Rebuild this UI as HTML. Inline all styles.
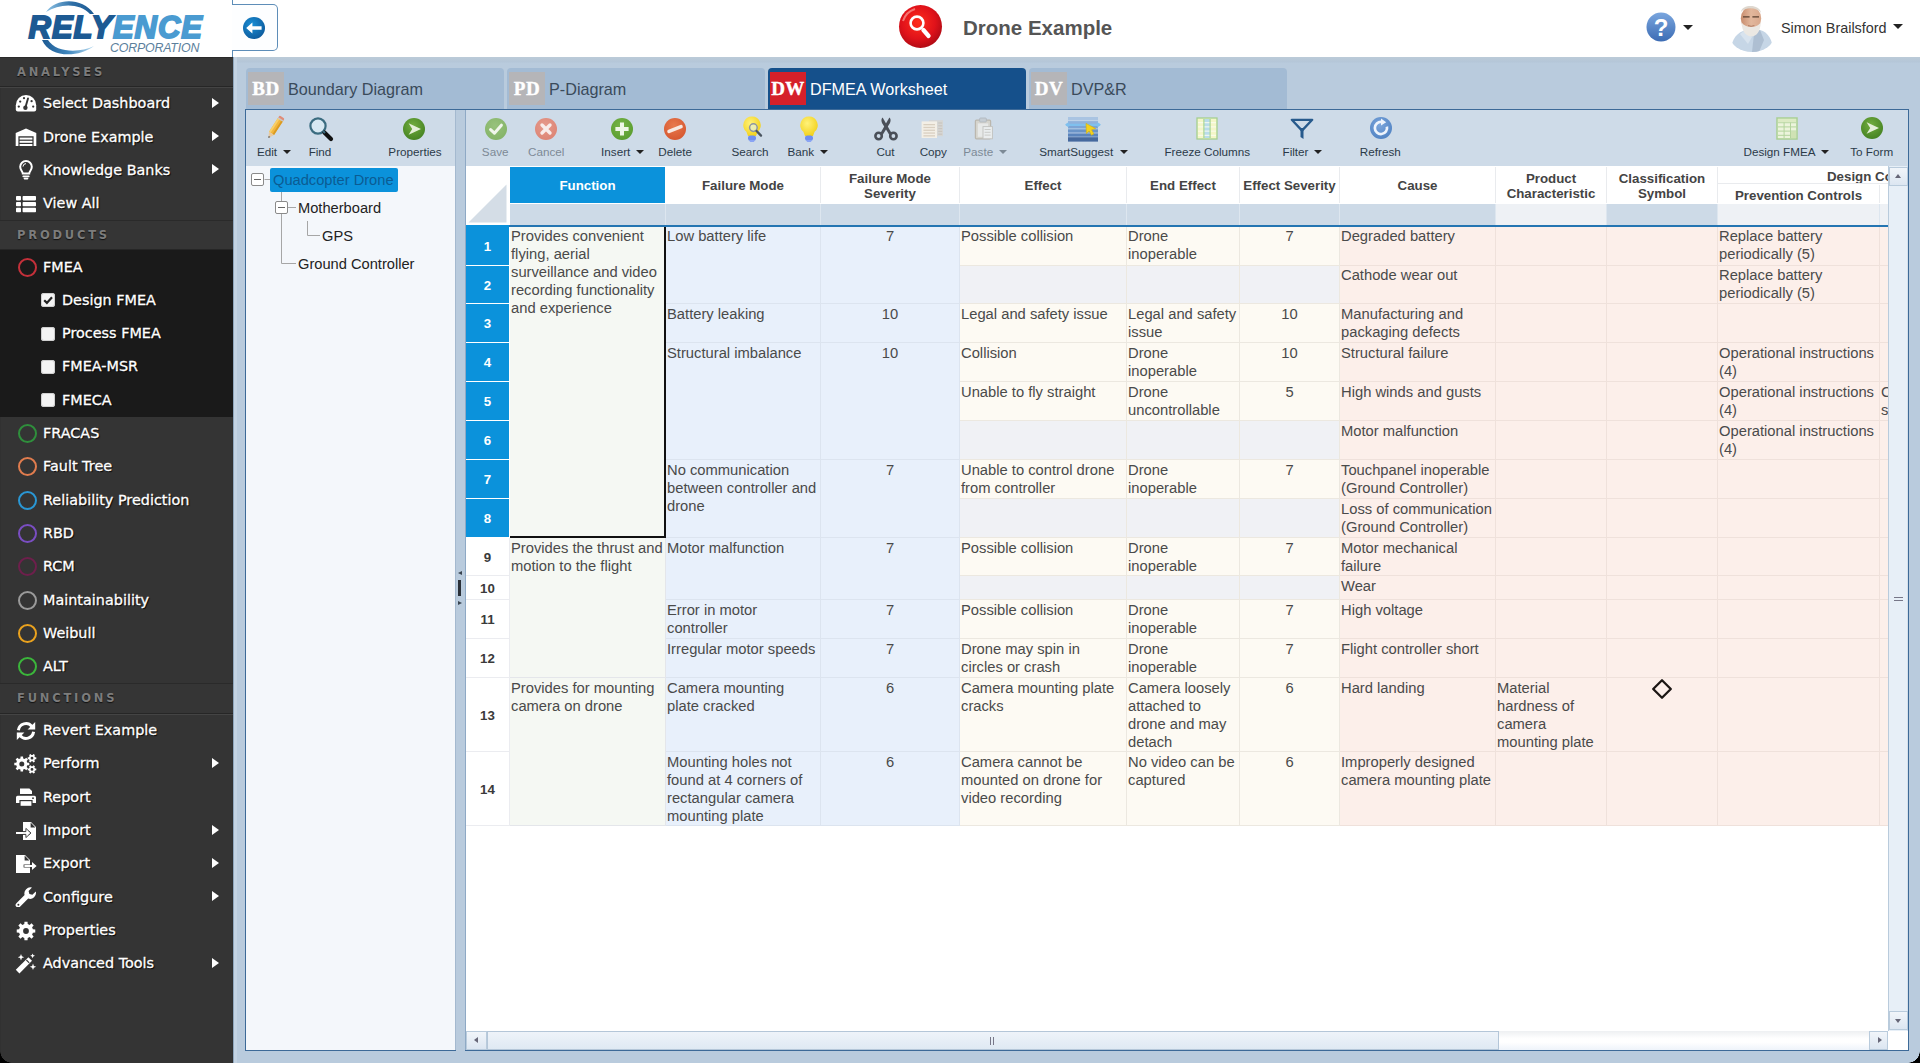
<!DOCTYPE html>
<html lang="en">
<head>
<meta charset="utf-8">
<title>Relyence - Drone Example - DFMEA Worksheet</title>
<style>
*{box-sizing:border-box;margin:0;padding:0}
html,body{width:1920px;height:1063px;overflow:hidden;background:#b9cbdd;font-family:"Liberation Sans",Arial,sans-serif;color:#333}
i{display:block;font-style:normal}
.abs{position:absolute}
#top{position:absolute;left:0;top:0;width:1920px;height:57px;background:#fff}
#logo{position:absolute;left:0;top:0;width:232px;height:57px;background:#fff;overflow:hidden}
#logo .r1{position:absolute;left:28.5px;top:10px;font:italic bold 31px/36px "Liberation Sans",sans-serif;letter-spacing:1px;color:#1d5a93;-webkit-text-stroke:1.8px #1d5a93;white-space:nowrap}
#logo .r1 b{color:#4a9bd1;font-weight:bold;-webkit-text-stroke:1.8px #4a9bd1}
#logo .r2{position:absolute;left:110px;top:41px;font:italic 12.4px/14px "Liberation Sans",sans-serif;color:#5c7f9c;letter-spacing:-.2px;white-space:nowrap}
#collapse{position:absolute;left:232px;top:4px;width:46px;height:47px;border:1px solid #5d8db8;border-left:none;border-radius:0 5px 5px 0;background:#fdfeff}
#title{position:absolute;left:963px;top:15px;font:bold 20.5px/26px "Liberation Sans",sans-serif;color:#555;white-space:nowrap}
#user{position:absolute;left:1781px;top:19px;font:14.4px/18px "Liberation Sans",sans-serif;color:#333;white-space:nowrap}
.caret{position:absolute;width:0;height:0;border-left:5px solid transparent;border-right:5px solid transparent;border-top:5.5px solid #222}
#side{position:absolute;left:0;top:57px;width:233px;height:1006px;background:#343434;font-family:"DejaVu Sans",Verdana,sans-serif;color:#fff;overflow:hidden;box-shadow:inset 0 3px 2px -1px #111}
#side .sec{position:absolute;left:0;width:233px;background:#353535;border-top:1px solid #2a2a2a;border-bottom:1px solid #262626;box-shadow:0 1px 0 #444}
#side .sec span{position:absolute;left:17px;top:7px;font:bold 11.5px/15px "DejaVu Sans",sans-serif;letter-spacing:2.8px;color:#7c7c7c;text-shadow:0 1px 1px #111}
#side .it{position:absolute;left:0;width:233px;height:33px;font-size:14.4px;line-height:33px;white-space:nowrap;text-shadow:1px 1px 1px #000;-webkit-text-stroke:.3px #fff}
#side .it .t{position:absolute;left:43px;top:.5px}
#side .it.sub .t{left:62px}
#side .it svg{position:absolute}
#side .arr{position:absolute;left:212px;top:11px;width:0;height:0;border-top:5.5px solid transparent;border-bottom:5.5px solid transparent;border-left:7px solid #fff}
#side .ring{position:absolute;left:17.5px;top:7.5px;width:19px;height:19px;border-radius:50%;border:2.5px solid #c33}
#side .cb{position:absolute;left:41px;top:10px;width:14px;height:14px;border-radius:3px;background:#f4f4f4;box-shadow:inset 0 0 0 1px #cfcfcf}
#dark{position:absolute;left:0;top:193px;width:233px;height:167px;background:#1a1a1a}
#main{position:absolute;left:233px;top:57px;width:1687px;height:1006px;background:linear-gradient(#bccbd8,#b7c8d8 3px,#b4c6d8 5px,#b9cbdd 6px);border-left:1px solid #8fa6bc;box-shadow:inset 3px 0 0 #c3d3e3}
.tab{position:absolute;top:68px;height:41px;width:258px;background:#a3bbd4;border-radius:4px 4px 0 0;font:16.2px/41px "Liberation Sans",sans-serif;color:#3a4a5a;white-space:nowrap}
.tab .bd{position:absolute;left:2px;top:4px;width:36px;height:33px;-webkit-text-stroke:.4px #fff;background:#b5b5b8;color:#fff;font:bold 19px/33px "Liberation Serif",serif;text-align:center;letter-spacing:.5px}
.tab .tx{position:absolute;left:42px;top:1px}
.tab.on{background:#15508b;color:#fff}
.tab.on .bd{background:#d5202a}
.panel{position:absolute;background:#fff;border:1px solid #3d6a98}
.tb{position:absolute;height:56px;width:0;font:11.7px/14px "Liberation Sans",sans-serif;color:#2b3a48;white-space:nowrap}
.tb .l{position:absolute;top:35px;left:0;transform:translateX(-50%)}
.tb.dis .l{color:#7d8a96}
.tc{position:absolute;top:150px;width:0;height:0;border-left:4px solid transparent;border-right:4px solid transparent;border-top:4.5px solid #222}
.tc.dis{border-top-color:#7d8a96}
.tr{font:14.67px/20px "Liberation Sans",sans-serif;white-space:nowrap}
.h{position:absolute;padding-top:2px;display:flex;align-items:center;justify-content:center;text-align:center;font:bold 13.3px/15.5px "Liberation Sans",sans-serif;color:#444;white-space:nowrap;background:#fff}
.hb{font:bold 13.3px/15.5px "Liberation Sans",sans-serif;color:#444;white-space:nowrap}
.c{position:absolute;overflow:hidden;white-space:nowrap;font:14.75px/17.9px "Liberation Sans",sans-serif;color:#4a4a4a;padding:2px 0 0 1px;border-right:1px solid #e4e6ea;border-bottom:1px solid #e4e6ea}
.c.pk{border-color:#efe1db}.c.cr{border-color:#ece8e0}.c.bl{border-color:#dce4ef}.c.gy{border-color:#e4e6ea}
.c.ctr{text-align:center;padding-left:0}
.c.p1{padding-top:1px}
.c.sel{border-right:2px solid #111;border-bottom:2px solid #111}
.rn{position:absolute;left:466px;width:44px;text-align:center;font:bold 13.3px/38px "Liberation Sans",sans-serif;color:#3a3a3a;background:#fff;border-bottom:1px solid #ebecf0;border-right:1px solid #ebecf0}
.rn.sel{background:#0b92db;color:#fff;width:43px;border:none}
.dia{font:22px/18px "DejaVu Sans",sans-serif;color:#222}
.sbb{position:absolute;background:linear-gradient(#f1f5fa,#dce6f1);border:1px solid #b9cbdc}
.sbb i{position:absolute;width:0;height:0}
.corner{position:absolute;bottom:0;width:12px;height:12px;background:#000}
.corner.l{left:0;background:radial-gradient(circle at 12px 0,transparent 11.5px,#000 12px)}
.corner.r{right:0;background:radial-gradient(circle at 0 0,transparent 11.5px,#000 12px)}

</style>
</head>
<body>
<div id="top">
<div id="logo"><svg class="abs" style="left:36px;top:0" width="80" height="57" viewBox="0 0 80 57"><defs><linearGradient id="lg1" x1="0" y1="0" x2="1" y2="0"><stop offset="0" stop-color="#8fc4e6"/><stop offset=".55" stop-color="#2d6ea6"/><stop offset="1" stop-color="#1d5a93"/></linearGradient><linearGradient id="lg2" x1="0" y1="0" x2="1" y2="0"><stop offset="0" stop-color="#1d5a93"/><stop offset=".5" stop-color="#3f86bd"/><stop offset="1" stop-color="#b9dcf1"/></linearGradient></defs><path fill="url(#lg1)" d="M10 12C20 -2 46 -3 58 14L54 14C44 3 24 3 10 12Z"/><path fill="url(#lg2)" d="M6 40C14 58 42 58 58 46C44 53 20 53 12 40Z"/></svg><span class="r1">RELY<b>ENCE</b></span><span class="r2">CORPORATION</span></div>
<div class="abs" style="left:232px;top:0;width:1px;height:5px;background:#5d8db8"></div><div class="abs" style="left:232px;top:50px;width:1px;height:7px;background:#5d8db8"></div>
<div id="collapse"><svg class="abs" style="left:10px;top:11px" width="24" height="24" viewBox="0 0 24 24"><defs><radialGradient id="cg" cx=".4" cy=".35" r=".7"><stop offset="0" stop-color="#1a8fd6"/><stop offset="1" stop-color="#0d5a9c"/></radialGradient></defs><circle cx="12" cy="12" r="11" fill="url(#cg)"/><path fill="#fff" d="M4.2 12L10.4 6.4V10.2H19.6V13.8H10.4V17.6Z"/></svg></div>
<svg class="abs" style="left:898px;top:4px" width="45" height="45" viewBox="0 0 45 45"><defs><radialGradient id="rg" cx=".45" cy=".4" r=".65"><stop offset="0" stop-color="#ff2d1c"/><stop offset=".6" stop-color="#e0121a"/><stop offset="1" stop-color="#a80a14"/></radialGradient></defs><circle cx="22.5" cy="22.5" r="21.5" fill="url(#rg)"/><path fill="none" stroke="#ffb0a8" stroke-opacity=".6" stroke-width="2" d="M5 17A18.5 18.5 0 0 1 17 5"/><circle cx="19" cy="19" r="6.4" fill="none" stroke="#fff" stroke-width="2.6"/><path stroke="#fff" stroke-width="4.2" stroke-linecap="round" d="M25.4 26L30.6 32"/></svg>
<div id="title">Drone Example</div>
<svg class="abs" style="left:1646px;top:12px" width="30" height="30" viewBox="0 0 30 30"><defs><linearGradient id="hg" x1="0" y1="0" x2="0" y2="1"><stop offset="0" stop-color="#7aa6de"/><stop offset="1" stop-color="#3c6cb4"/></linearGradient></defs><circle cx="15" cy="15" r="14.5" fill="url(#hg)"/><text x="15" y="23.5" text-anchor="middle" font-family="Liberation Sans,sans-serif" font-weight="bold" font-size="24" fill="#fff">?</text></svg>
<i class="caret" style="left:1683px;top:25px"></i>
<svg class="abs" style="left:1730px;top:4px" width="44" height="48" viewBox="0 0 44 48"><defs><clipPath id="av"><path d="M0 0H44V32A22 16 0 0 1 0 32Z"/></clipPath><linearGradient id="sk" x1="0" y1="0" x2="1" y2="0"><stop offset="0" stop-color="#c98d6e"/><stop offset=".5" stop-color="#e2b79c"/><stop offset="1" stop-color="#d9a88c"/></linearGradient></defs><g clip-path="url(#av)"><path fill="#c6d6e6" d="M1 48C1 34 8 28 16 26L30 26C38 28 43 36 43 48Z"/><path fill="#aebfd2" d="M24 30L30 26L34 36L29 48H22Z"/><path fill="#d8e3ee" d="M14 27L22 33L18 40L10 30Z"/><ellipse cx="21" cy="14.5" rx="10.2" ry="12" fill="url(#sk)"/><path fill="#ded8d0" d="M11 8C12 0 30 0 31 9C27 3 15 3 11 8Z"/><path fill="#ebe8e3" d="M11.4 18C12 28 16.4 32.4 21.4 32.4C26.4 32.4 30.4 28 30.8 18C27.6 24.6 15.2 24.6 11.4 18Z"/><path stroke="#5a4030" stroke-width="1.2" fill="none" d="M13 12.8H19.6M22.4 12.8H29"/><path stroke="#b07a62" stroke-width="1" fill="none" d="M18 21.6Q21.2 23 24.4 21.6"/></g></svg>
<div id="user">Simon Brailsford</div><i class="caret" style="left:1893px;top:24px"></i>
</div>
<div id="side">
<div class="sec" style="top:0.0px;height:29.5px"><span>ANALYSES</span></div>
<div class="it" style="top:29.70px"><svg style="left:15px;top:6px" width="22" height="20" viewBox="0 0 22 20"><path fill="#fff" d="M.8 12.2A10.2 10.2 0 0 1 21.2 12.2V16.4Q21.2 18.4 19.2 18.4H2.8Q.8 18.4 .8 16.4Z"/><path stroke="#343434" stroke-width="1.9" stroke-linecap="round" d="M10.4 14.6L13 5.4"/><circle cx="10.4" cy="14.8" r="2.2" fill="#343434"/><g fill="#343434"><circle cx="3.8" cy="13.6" r="1.15"/><circle cx="5.2" cy="8.6" r="1.15"/><circle cx="9" cy="5.2" r="1.1"/><circle cx="16.6" cy="8.2" r="1.15"/><circle cx="18.2" cy="13.6" r="1.15"/></g></svg><span class="t">Select Dashboard</span><i class="arr"></i></div>
<div class="it" style="top:63.03px"><svg style="left:15px;top:7px" width="22" height="20" viewBox="0 0 22 20"><path fill="#fff" d="M11 1.5L21.3 6V19H18.6V9.2H3.4V19H0.7V6Z"/><g fill="#fff"><rect x="4.6" y="10.6" width="12.8" height="2"/><rect x="4.6" y="13.8" width="12.8" height="2"/><rect x="4.6" y="17" width="12.8" height="2"/></g></svg><span class="t">Drone Example</span><i class="arr"></i></div>
<div class="it" style="top:96.36px"><svg style="left:15px;top:6px" width="22" height="21" viewBox="0 0 22 21"><path fill="none" stroke="#fff" stroke-width="2" d="M7.8 14.6C7.8 12.4 5.2 11.3 5.2 7.8A5.8 5.8 0 0 1 16.8 7.8C16.8 11.3 14.2 12.4 14.2 14.6Z"/><path stroke="#fff" stroke-width="1.6" stroke-linecap="round" d="M8.2 17.4H13.8M9.4 19.6H12.6"/><path fill="none" stroke="#fff" stroke-width="1" d="M8 7.6A3.1 3.1 0 0 1 11 4.6"/></svg><span class="t">Knowledge Banks</span><i class="arr"></i></div>
<div class="it" style="top:129.69px"><svg style="left:15px;top:7px" width="22" height="20" viewBox="0 0 22 20"><g fill="#fff"><rect x="1" y="2" width="5" height="4.4" rx=".8"/><rect x="7.6" y="2" width="13.4" height="4.4" rx=".8"/><rect x="1" y="7.9" width="5" height="4.4" rx=".8"/><rect x="7.6" y="7.9" width="13.4" height="4.4" rx=".8"/><rect x="1" y="13.8" width="5" height="4.4" rx=".8"/><rect x="7.6" y="13.8" width="13.4" height="4.4" rx=".8"/></g></svg><span class="t">View All</span></div>
<div class="sec" style="top:162.5px;height:30.5px"><span>PRODUCTS</span></div>
<div id="dark"></div>
<div class="it" style="top:193.00px"><i class="ring" style="border-color:#c4303a"></i><span class="t">FMEA</span></div>
<div class="it sub" style="top:226.33px"><i class="cb"></i><svg style="left:42px;top:11px" width="12" height="12" viewBox="0 0 12 12"><path fill="none" stroke="#222" stroke-width="2.2" d="M2.2 6.2L4.9 8.9L10 3.2"/></svg><span class="t">Design FMEA</span></div>
<div class="it sub" style="top:259.66px"><i class="cb"></i><span class="t">Process FMEA</span></div>
<div class="it sub" style="top:292.99px"><i class="cb"></i><span class="t">FMEA-MSR</span></div>
<div class="it sub" style="top:326.32px"><i class="cb"></i><span class="t">FMECA</span></div>
<div class="it" style="top:359.65px"><i class="ring" style="border-color:#2f8f3c"></i><span class="t">FRACAS</span></div>
<div class="it" style="top:392.98px"><i class="ring" style="border-color:#e07c4e"></i><span class="t">Fault Tree</span></div>
<div class="it" style="top:426.31px"><i class="ring" style="border-color:#2a97d4"></i><span class="t">Reliability Prediction</span></div>
<div class="it" style="top:459.64px"><i class="ring" style="border-color:#7a4ec2"></i><span class="t">RBD</span></div>
<div class="it" style="top:492.97px"><i class="ring" style="border-color:#6e1f4c"></i><span class="t">RCM</span></div>
<div class="it" style="top:526.30px"><i class="ring" style="border-color:#9a9a9a"></i><span class="t">Maintainability</span></div>
<div class="it" style="top:559.63px"><i class="ring" style="border-color:#eaa21e"></i><span class="t">Weibull</span></div>
<div class="it" style="top:592.96px"><i class="ring" style="border-color:#3bb63b"></i><span class="t">ALT</span></div>
<div class="sec" style="top:626.3px;height:30.3px"><span>FUNCTIONS</span></div>
<div class="it" style="top:656.60px"><svg style="left:15px;top:7px" width="22" height="20" viewBox="0 0 22 20"><g fill="none" stroke="#fff" stroke-width="3"><path d="M3.4 9.2A7.6 7.6 0 0 1 16.8 5.4"/><path d="M18.6 10.8A7.6 7.6 0 0 1 5.2 14.6"/></g><path fill="#fff" d="M20.2 1V8.6H12.6Z"/><path fill="#fff" d="M1.8 19V11.4H9.4Z"/></svg><span class="t">Revert Example</span></div>
<div class="it" style="top:689.93px"><svg style="left:14px;top:6px" width="23" height="21" viewBox="0 0 23 21"><path fill="#fff" fill-rule="evenodd" d="M13.33 9.63 L15.30 9.75 L15.30 12.25 L13.33 12.37 L12.68 13.94 L13.98 15.42 L12.22 17.18 L10.74 15.88 L9.17 16.53 L9.05 18.50 L6.55 18.50 L6.43 16.53 L4.86 15.88 L3.38 17.18 L1.62 15.42 L2.92 13.94 L2.27 12.37 L0.30 12.25 L0.30 9.75 L2.27 9.63 L2.92 8.06 L1.62 6.58 L3.38 4.82 L4.86 6.12 L6.43 5.47 L6.55 3.50 L9.05 3.50 L9.17 5.47 L10.74 6.12 L12.22 4.82 L13.98 6.58 L12.68 8.06Z M5.30 11.00 a2.50 2.50 0 1 0 5.00 0 a2.50 2.50 0 1 0 -5.00 0Z"/><path fill="#fff" fill-rule="evenodd" d="M21.03 4.18 L22.29 4.24 L22.29 6.16 L21.03 6.22 L20.40 7.32 L20.98 8.44 L19.32 9.40 L18.63 8.34 L17.37 8.34 L16.68 9.40 L15.02 8.44 L15.60 7.32 L14.97 6.22 L13.71 6.16 L13.71 4.24 L14.97 4.18 L15.60 3.08 L15.02 1.96 L16.68 1.00 L17.37 2.06 L18.63 2.06 L19.32 1.00 L20.98 1.96 L20.40 3.08Z M16.60 5.20 a1.40 1.40 0 1 0 2.80 0 a1.40 1.40 0 1 0 -2.80 0Z"/><path fill="#fff" fill-rule="evenodd" d="M21.03 15.38 L22.29 15.44 L22.29 17.36 L21.03 17.42 L20.40 18.52 L20.98 19.64 L19.32 20.60 L18.63 19.54 L17.37 19.54 L16.68 20.60 L15.02 19.64 L15.60 18.52 L14.97 17.42 L13.71 17.36 L13.71 15.44 L14.97 15.38 L15.60 14.28 L15.02 13.16 L16.68 12.20 L17.37 13.26 L18.63 13.26 L19.32 12.20 L20.98 13.16 L20.40 14.28Z M16.60 16.40 a1.40 1.40 0 1 0 2.80 0 a1.40 1.40 0 1 0 -2.80 0Z"/></svg><span class="t">Perform</span><i class="arr"></i></div>
<div class="it" style="top:723.26px"><svg style="left:15px;top:7px" width="22" height="20" viewBox="0 0 22 20"><path fill="#fff" d="M5 1.5H14.4L17 4.1V8H5Z"/><path fill="#fff" d="M2.6 8.8H19.4Q21 8.8 21 10.4V16H17.6V13H4.4V16H1V10.4Q1 8.8 2.6 8.8Z"/><rect x="5.6" y="14.2" width="10.8" height="4.6" fill="#fff"/><circle cx="18" cy="11.2" r=".9" fill="#343434"/><path stroke="#343434" stroke-width="1.2" d="M5 7.6H17"/></svg><span class="t">Report</span></div>
<div class="it" style="top:756.59px"><svg style="left:15px;top:7px" width="22" height="20" viewBox="0 0 22 20"><path fill="#fff" d="M8 1H16L21 6V19H8V13.4H14.6V10.6H8Z"/><path fill="#343434" d="M15.6 1.6V6.4H20.4"/><path fill="#fff" d="M1 11H10.6V8L15.4 12L10.6 16V13H1Z"/><path fill="none" stroke="#343434" stroke-width=".9" d="M8 10.6H10.9V7.4L16 12L10.9 16.6V13.4H8"/></svg><span class="t">Import</span><i class="arr"></i></div>
<div class="it" style="top:789.92px"><svg style="left:15px;top:7px" width="22" height="20" viewBox="0 0 22 20"><path fill="#fff" d="M1 1H10L15 6V10.4H8.6V13.6H15V19H1Z"/><path fill="#343434" d="M9.6 1.6V6.4H14.4"/><path fill="#fff" d="M9.4 11H17V8L21.6 12L17 16V13H9.4Z"/></svg><span class="t">Export</span><i class="arr"></i></div>
<div class="it" style="top:823.25px"><svg style="left:15px;top:7px" width="22" height="20" viewBox="0 0 22 20"><path fill="#fff" d="M20.8 4.4L17.4 7.8L14.4 7L13.6 4L17 .6A6 6 0 0 0 9.6 8L1.4 16.2A2.5 2.5 0 0 0 5 19.8L13.2 11.6A6 6 0 0 0 20.8 4.4Z"/><circle cx="3.4" cy="17.8" r="1" fill="#343434"/></svg><span class="t">Configure</span><i class="arr"></i></div>
<div class="it" style="top:856.58px"><svg style="left:15px;top:7px" width="22" height="20" viewBox="0 0 22 20"><path fill="#fff" fill-rule="evenodd" d="M17.89 8.29 L20.27 8.46 L20.27 11.54 L17.89 11.71 L17.08 13.66 L18.65 15.47 L16.47 17.65 L14.66 16.08 L12.71 16.89 L12.54 19.27 L9.46 19.27 L9.29 16.89 L7.34 16.08 L5.53 17.65 L3.35 15.47 L4.92 13.66 L4.11 11.71 L1.73 11.54 L1.73 8.46 L4.11 8.29 L4.92 6.34 L3.35 4.53 L5.53 2.35 L7.34 3.92 L9.29 3.11 L9.46 0.73 L12.54 0.73 L12.71 3.11 L14.66 3.92 L16.47 2.35 L18.65 4.53 L17.08 6.34Z M8.10 10.00 a2.90 2.90 0 1 0 5.80 0 a2.90 2.90 0 1 0 -5.80 0Z"/></svg><span class="t">Properties</span></div>
<div class="it" style="top:889.91px"><svg style="left:15px;top:6px" width="22" height="21" viewBox="0 0 22 21"><path fill="#fff" d="M.8 16.8L13.4 4.2L17 7.8L4.4 20.4Z"/><path stroke="#343434" stroke-width="1.1" d="M11.4 7L14.2 9.8"/><g fill="#fff"><path d="M6 1L6.9 3.3L9.2 4.2L6.9 5.1L6 7.4L5.1 5.1L2.8 4.2L5.1 3.3Z"/><path d="M17.6 .4L18.3 2.1L20 2.8L18.3 3.5L17.6 5.2L16.9 3.5L15.2 2.8L16.9 2.1Z"/><path d="M18 10.6L18.9 12.9L21.2 13.8L18.9 14.7L18 17L17.1 14.7L14.8 13.8L17.1 12.9Z"/></g></svg><span class="t">Advanced Tools</span><i class="arr"></i></div>
</div>
<div id="main"></div>
<div class="tab" style="left:246px"><span class="bd">BD</span><span class="tx">Boundary Diagram</span></div>
<div class="tab" style="left:507px"><span class="bd">PD</span><span class="tx">P-Diagram</span></div>
<div class="tab on" style="left:768px"><span class="bd">DW</span><span class="tx">DFMEA Worksheet</span></div>
<div class="tab" style="left:1029px"><span class="bd">DV</span><span class="tx">DVP&amp;R</span></div>
<div class="abs" style="left:245px;top:109px;width:1664px;height:1px;background:#3d6a98"></div>
<div class="panel" style="left:245px;top:109px;width:211px;height:942px;background:#f4f7fb"></div>
<div class="abs" style="left:246px;top:110px;width:209px;height:56px;background:#cedbe8"></div>
<svg class="abs" style="left:246px;top:166px" width="209" height="120" viewBox="0 0 209 120"><g fill="none" stroke="#a6a6a6" stroke-width="1"><path d="M18.5 13.5H25"/><path d="M35.5 20V97.5H50"/><path d="M42 41.5H50"/><path d="M61.5 55V69.5H74"/></g><g fill="#fff" stroke="#8a8a8a" stroke-width="1"><rect x="5.5" y="7.5" width="12" height="12" rx="1.5"/><rect x="29.5" y="35.5" width="12" height="12" rx="1.5"/></g><path stroke="#666" stroke-width="1" d="M8 13.5H15M32 41.5H39"/></svg>
<div class="abs" style="left:270px;top:168px;width:128px;height:24px;background:#0b92db;border-radius:2px"></div>
<div class="abs tr" style="left:273px;top:170px;color:#0b5c93">Quadcopter Drone</div>
<div class="abs tr" style="left:298px;top:198px;color:#222">Motherboard</div>
<div class="abs tr" style="left:322px;top:226px;color:#222">GPS</div>
<div class="abs tr" style="left:298px;top:254px;color:#222">Ground Controller</div>
<div class="panel" style="left:465px;top:109px;width:1444px;height:942px"></div>
<div class="abs" style="left:466px;top:110px;width:1442px;height:56px;background:#cedbe8"></div>
<div class="abs" style="left:466px;top:166px;width:1422px;height:38px;background:#fff"></div>
<div class="abs" style="left:466px;top:204px;width:1422px;height:21px;background:#cddae7"></div>
<div class="abs" style="left:466px;top:225px;width:1422px;height:2px;background:#2475b2"></div>
<svg class="abs" style="left:466px;top:166px" width="44" height="59" viewBox="0 0 44 59"><rect width="44" height="59" fill="#fff"/><path fill="#d4dde6" d="M2.5 56.5L40.5 18.5V56.5Z"/></svg>
<div class="h" style="left:510px;top:167px;width:155px;height:36px;background:#0b92db;color:#fff"><span>Function</span></div>
<div class="abs" style="left:510px;top:204px;width:156px;height:21px;background:#cddae7;border-right:1px solid #dde6ef"></div>
<div class="h" style="left:666px;top:167px;width:155px;height:36px;border-right:1px solid #e9ebee"><span>Failure Mode</span></div>
<div class="abs" style="left:666px;top:204px;width:155px;height:21px;background:#cddae7;border-right:1px solid #dde6ef"></div>
<div class="h" style="left:821px;top:167px;width:139px;height:36px;border-right:1px solid #e9ebee"><span>Failure Mode<br>Severity</span></div>
<div class="abs" style="left:821px;top:204px;width:139px;height:21px;background:#cddae7;border-right:1px solid #dde6ef"></div>
<div class="h" style="left:960px;top:167px;width:167px;height:36px;border-right:1px solid #e9ebee"><span>Effect</span></div>
<div class="abs" style="left:960px;top:204px;width:167px;height:21px;background:#cddae7;border-right:1px solid #dde6ef"></div>
<div class="h" style="left:1127px;top:167px;width:113px;height:36px;border-right:1px solid #e9ebee"><span>End Effect</span></div>
<div class="abs" style="left:1127px;top:204px;width:113px;height:21px;background:#cddae7;border-right:1px solid #dde6ef"></div>
<div class="h" style="left:1240px;top:167px;width:100px;height:36px;border-right:1px solid #e9ebee"><span>Effect Severity</span></div>
<div class="abs" style="left:1240px;top:204px;width:100px;height:21px;background:#cddae7;border-right:1px solid #dde6ef"></div>
<div class="h" style="left:1340px;top:167px;width:156px;height:36px;border-right:1px solid #e9ebee"><span>Cause</span></div>
<div class="abs" style="left:1340px;top:204px;width:156px;height:21px;background:#cddae7;border-right:1px solid #dde6ef"></div>
<div class="h" style="left:1496px;top:167px;width:111px;height:36px;border-right:1px solid #e9ebee"><span>Product<br>Characteristic</span></div>
<div class="abs" style="left:1496px;top:204px;width:111px;height:21px;background:#eef1f5;border-right:1px solid #dde6ef"></div>
<div class="h" style="left:1607px;top:167px;width:111px;height:36px;border-right:1px solid #e9ebee"><span>Classification<br>Symbol</span></div>
<div class="abs" style="left:1607px;top:204px;width:111px;height:21px;background:#cddae7;border-right:1px solid #dde6ef"></div>
<div class="abs" style="left:1718px;top:204px;width:162px;height:21px;background:#eef1f5;border-right:1px solid #dde6ef"></div>
<div class="abs" style="left:1880px;top:204px;width:9px;height:21px;background:#eef1f5;border-right:1px solid #dde6ef"></div>
<div class="abs" style="left:1718px;top:167px;width:170px;height:17px;border-bottom:1px solid #e9ebee;overflow:hidden"><span class="abs hb" style="left:109px;top:2px">Design Controls</span></div>
<div class="h" style="left:1718px;top:185px;width:162px;height:18px;padding-top:3px;border-right:1px solid #e9ebee"><span>Prevention Controls</span></div>
<div class="rn sel" style="top:225px;height:40px;line-height:43px">1</div>
<div class="rn sel" style="top:266px;height:37px;line-height:39px">2</div>
<div class="rn sel" style="top:304px;height:38px;line-height:39px">3</div>
<div class="rn sel" style="top:343px;height:38px;line-height:39px">4</div>
<div class="rn sel" style="top:382px;height:38px;line-height:39px">5</div>
<div class="rn sel" style="top:421px;height:38px;line-height:39px">6</div>
<div class="rn sel" style="top:460px;height:38px;line-height:39px">7</div>
<div class="rn sel" style="top:499px;height:38px;line-height:39px">8</div>
<div class="rn" style="top:538px;height:38px;line-height:39px">9</div>
<div class="rn" style="top:576px;height:24px;line-height:25px">10</div>
<div class="rn" style="top:600px;height:39px;line-height:40px">11</div>
<div class="rn" style="top:639px;height:39px;line-height:40px">12</div>
<div class="rn" style="top:678px;height:74px;line-height:75px">13</div>
<div class="rn" style="top:752px;height:74px;line-height:75px">14</div>
<div class="c sel gy p1" style="left:510px;top:227px;width:156px;height:311px;background:#f5f8f3;">Provides convenient<br>flying, aerial<br>surveillance and video<br>recording functionality<br>and experience</div>
<div class="c  gy" style="left:510px;top:538px;width:156px;height:140px;background:#f5f8f3;">Provides the thrust and<br>motion to the flight</div>
<div class="c  gy" style="left:510px;top:678px;width:156px;height:148px;background:#f5f8f3;">Provides for mounting<br>camera on drone</div>
<div class="c  bl p1" style="left:666px;top:227px;width:155px;height:77px;background:#e8f0fb;">Low battery life</div>
<div class="c ctr bl p1" style="left:821px;top:227px;width:139px;height:77px;background:#e8f0fb;">7</div>
<div class="c  bl" style="left:666px;top:304px;width:155px;height:39px;background:#e8f0fb;">Battery leaking</div>
<div class="c ctr bl" style="left:821px;top:304px;width:139px;height:39px;background:#e8f0fb;">10</div>
<div class="c  bl" style="left:666px;top:343px;width:155px;height:117px;background:#e8f0fb;">Structural imbalance</div>
<div class="c ctr bl" style="left:821px;top:343px;width:139px;height:117px;background:#e8f0fb;">10</div>
<div class="c  bl" style="left:666px;top:460px;width:155px;height:78px;background:#e8f0fb;">No communication<br>between controller and<br>drone</div>
<div class="c ctr bl" style="left:821px;top:460px;width:139px;height:78px;background:#e8f0fb;">7</div>
<div class="c  bl" style="left:666px;top:538px;width:155px;height:62px;background:#e8f0fb;">Motor malfunction</div>
<div class="c ctr bl" style="left:821px;top:538px;width:139px;height:62px;background:#e8f0fb;">7</div>
<div class="c  bl" style="left:666px;top:600px;width:155px;height:39px;background:#e8f0fb;">Error in motor<br>controller</div>
<div class="c ctr bl" style="left:821px;top:600px;width:139px;height:39px;background:#e8f0fb;">7</div>
<div class="c  bl" style="left:666px;top:639px;width:155px;height:39px;background:#e8f0fb;">Irregular motor speeds</div>
<div class="c ctr bl" style="left:821px;top:639px;width:139px;height:39px;background:#e8f0fb;">7</div>
<div class="c  bl" style="left:666px;top:678px;width:155px;height:74px;background:#e8f0fb;">Camera mounting<br>plate cracked</div>
<div class="c ctr bl" style="left:821px;top:678px;width:139px;height:74px;background:#e8f0fb;">6</div>
<div class="c  bl" style="left:666px;top:752px;width:155px;height:74px;background:#e8f0fb;">Mounting holes not<br>found at 4 corners of<br>rectangular camera<br>mounting plate</div>
<div class="c ctr bl" style="left:821px;top:752px;width:139px;height:74px;background:#e8f0fb;">6</div>
<div class="c  cr p1" style="left:960px;top:227px;width:167px;height:39px;background:#fdfaf3;">Possible collision</div>
<div class="c  cr p1" style="left:1127px;top:227px;width:113px;height:39px;background:#fdfaf3;">Drone<br>inoperable</div>
<div class="c ctr cr p1" style="left:1240px;top:227px;width:100px;height:39px;background:#fdfaf3;">7</div>
<div class="c  cr p1" style="left:960px;top:266px;width:167px;height:38px;background:#f0f1f5;"></div>
<div class="c  cr p1" style="left:1127px;top:266px;width:113px;height:38px;background:#f0f1f5;"></div>
<div class="c  cr p1" style="left:1240px;top:266px;width:100px;height:38px;background:#f0f1f5;"></div>
<div class="c  cr" style="left:960px;top:304px;width:167px;height:39px;background:#fdfaf3;">Legal and safety issue</div>
<div class="c  cr" style="left:1127px;top:304px;width:113px;height:39px;background:#fdfaf3;">Legal and safety<br>issue</div>
<div class="c ctr cr" style="left:1240px;top:304px;width:100px;height:39px;background:#fdfaf3;">10</div>
<div class="c  cr" style="left:960px;top:343px;width:167px;height:39px;background:#fdfaf3;">Collision</div>
<div class="c  cr" style="left:1127px;top:343px;width:113px;height:39px;background:#fdfaf3;">Drone<br>inoperable</div>
<div class="c ctr cr" style="left:1240px;top:343px;width:100px;height:39px;background:#fdfaf3;">10</div>
<div class="c  cr" style="left:960px;top:382px;width:167px;height:39px;background:#fdfaf3;">Unable to fly straight</div>
<div class="c  cr" style="left:1127px;top:382px;width:113px;height:39px;background:#fdfaf3;">Drone<br>uncontrollable</div>
<div class="c ctr cr" style="left:1240px;top:382px;width:100px;height:39px;background:#fdfaf3;">5</div>
<div class="c  cr" style="left:960px;top:421px;width:167px;height:39px;background:#f0f1f5;"></div>
<div class="c  cr" style="left:1127px;top:421px;width:113px;height:39px;background:#f0f1f5;"></div>
<div class="c  cr" style="left:1240px;top:421px;width:100px;height:39px;background:#f0f1f5;"></div>
<div class="c  cr" style="left:960px;top:460px;width:167px;height:39px;background:#fdfaf3;">Unable to control drone<br>from controller</div>
<div class="c  cr" style="left:1127px;top:460px;width:113px;height:39px;background:#fdfaf3;">Drone<br>inoperable</div>
<div class="c ctr cr" style="left:1240px;top:460px;width:100px;height:39px;background:#fdfaf3;">7</div>
<div class="c  cr" style="left:960px;top:499px;width:167px;height:39px;background:#f0f1f5;"></div>
<div class="c  cr" style="left:1127px;top:499px;width:113px;height:39px;background:#f0f1f5;"></div>
<div class="c  cr" style="left:1240px;top:499px;width:100px;height:39px;background:#f0f1f5;"></div>
<div class="c  cr" style="left:960px;top:538px;width:167px;height:38px;background:#fdfaf3;">Possible collision</div>
<div class="c  cr" style="left:1127px;top:538px;width:113px;height:38px;background:#fdfaf3;">Drone<br>inoperable</div>
<div class="c ctr cr" style="left:1240px;top:538px;width:100px;height:38px;background:#fdfaf3;">7</div>
<div class="c  cr" style="left:960px;top:576px;width:167px;height:24px;background:#f0f1f5;"></div>
<div class="c  cr" style="left:1127px;top:576px;width:113px;height:24px;background:#f0f1f5;"></div>
<div class="c  cr" style="left:1240px;top:576px;width:100px;height:24px;background:#f0f1f5;"></div>
<div class="c  cr" style="left:960px;top:600px;width:167px;height:39px;background:#fdfaf3;">Possible collision</div>
<div class="c  cr" style="left:1127px;top:600px;width:113px;height:39px;background:#fdfaf3;">Drone<br>inoperable</div>
<div class="c ctr cr" style="left:1240px;top:600px;width:100px;height:39px;background:#fdfaf3;">7</div>
<div class="c  cr" style="left:960px;top:639px;width:167px;height:39px;background:#fdfaf3;">Drone may spin in<br>circles or crash</div>
<div class="c  cr" style="left:1127px;top:639px;width:113px;height:39px;background:#fdfaf3;">Drone<br>inoperable</div>
<div class="c ctr cr" style="left:1240px;top:639px;width:100px;height:39px;background:#fdfaf3;">7</div>
<div class="c  cr" style="left:960px;top:678px;width:167px;height:74px;background:#fdfaf3;">Camera mounting plate<br>cracks</div>
<div class="c  cr" style="left:1127px;top:678px;width:113px;height:74px;background:#fdfaf3;">Camera loosely<br>attached to<br>drone and may<br>detach</div>
<div class="c ctr cr" style="left:1240px;top:678px;width:100px;height:74px;background:#fdfaf3;">6</div>
<div class="c  cr" style="left:960px;top:752px;width:167px;height:74px;background:#fdfaf3;">Camera cannot be<br>mounted on drone for<br>video recording</div>
<div class="c  cr" style="left:1127px;top:752px;width:113px;height:74px;background:#fdfaf3;">No video can be<br>captured</div>
<div class="c ctr cr" style="left:1240px;top:752px;width:100px;height:74px;background:#fdfaf3;">6</div>
<div class="c  pk p1" style="left:1340px;top:227px;width:156px;height:39px;background:#fcefea;">Degraded battery</div>
<div class="c  pk p1" style="left:1496px;top:227px;width:111px;height:39px;background:#fcefea;"></div>
<div class="c ctr pk p1" style="left:1607px;top:227px;width:111px;height:39px;background:#fcefea;"></div>
<div class="c  pk p1" style="left:1718px;top:227px;width:162px;height:39px;background:#fcefea;">Replace battery<br>periodically (5)</div>
<div class="c  pk p1" style="left:1880px;top:227px;width:9px;height:39px;background:#fcefea;border-right:none;"></div>
<div class="c  pk p1" style="left:1340px;top:266px;width:156px;height:38px;background:#fcefea;">Cathode wear out</div>
<div class="c  pk p1" style="left:1496px;top:266px;width:111px;height:38px;background:#fcefea;"></div>
<div class="c ctr pk p1" style="left:1607px;top:266px;width:111px;height:38px;background:#fcefea;"></div>
<div class="c  pk p1" style="left:1718px;top:266px;width:162px;height:38px;background:#fcefea;">Replace battery<br>periodically (5)</div>
<div class="c  pk p1" style="left:1880px;top:266px;width:9px;height:38px;background:#fcefea;border-right:none;"></div>
<div class="c  pk" style="left:1340px;top:304px;width:156px;height:39px;background:#fcefea;">Manufacturing and<br>packaging defects</div>
<div class="c  pk" style="left:1496px;top:304px;width:111px;height:39px;background:#fcefea;"></div>
<div class="c ctr pk" style="left:1607px;top:304px;width:111px;height:39px;background:#fcefea;"></div>
<div class="c  pk" style="left:1718px;top:304px;width:162px;height:39px;background:#fcefea;"></div>
<div class="c  pk" style="left:1880px;top:304px;width:9px;height:39px;background:#fcefea;border-right:none;"></div>
<div class="c  pk" style="left:1340px;top:343px;width:156px;height:39px;background:#fcefea;">Structural failure</div>
<div class="c  pk" style="left:1496px;top:343px;width:111px;height:39px;background:#fcefea;"></div>
<div class="c ctr pk" style="left:1607px;top:343px;width:111px;height:39px;background:#fcefea;"></div>
<div class="c  pk" style="left:1718px;top:343px;width:162px;height:39px;background:#fcefea;">Operational instructions<br>(4)</div>
<div class="c  pk" style="left:1880px;top:343px;width:9px;height:39px;background:#fcefea;border-right:none;"></div>
<div class="c  pk" style="left:1340px;top:382px;width:156px;height:39px;background:#fcefea;">High winds and gusts</div>
<div class="c  pk" style="left:1496px;top:382px;width:111px;height:39px;background:#fcefea;"></div>
<div class="c ctr pk" style="left:1607px;top:382px;width:111px;height:39px;background:#fcefea;"></div>
<div class="c  pk" style="left:1718px;top:382px;width:162px;height:39px;background:#fcefea;">Operational instructions<br>(4)</div>
<div class="c  pk" style="left:1880px;top:382px;width:9px;height:39px;background:#fcefea;border-right:none;">C<br>s</div>
<div class="c  pk" style="left:1340px;top:421px;width:156px;height:39px;background:#fcefea;">Motor malfunction</div>
<div class="c  pk" style="left:1496px;top:421px;width:111px;height:39px;background:#fcefea;"></div>
<div class="c ctr pk" style="left:1607px;top:421px;width:111px;height:39px;background:#fcefea;"></div>
<div class="c  pk" style="left:1718px;top:421px;width:162px;height:39px;background:#fcefea;">Operational instructions<br>(4)</div>
<div class="c  pk" style="left:1880px;top:421px;width:9px;height:39px;background:#fcefea;border-right:none;"></div>
<div class="c  pk" style="left:1340px;top:460px;width:156px;height:39px;background:#fcefea;">Touchpanel inoperable<br>(Ground Controller)</div>
<div class="c  pk" style="left:1496px;top:460px;width:111px;height:39px;background:#fcefea;"></div>
<div class="c ctr pk" style="left:1607px;top:460px;width:111px;height:39px;background:#fcefea;"></div>
<div class="c  pk" style="left:1718px;top:460px;width:162px;height:39px;background:#fcefea;"></div>
<div class="c  pk" style="left:1880px;top:460px;width:9px;height:39px;background:#fcefea;border-right:none;"></div>
<div class="c  pk" style="left:1340px;top:499px;width:156px;height:39px;background:#fcefea;">Loss of communication<br>(Ground Controller)</div>
<div class="c  pk" style="left:1496px;top:499px;width:111px;height:39px;background:#fcefea;"></div>
<div class="c ctr pk" style="left:1607px;top:499px;width:111px;height:39px;background:#fcefea;"></div>
<div class="c  pk" style="left:1718px;top:499px;width:162px;height:39px;background:#fcefea;"></div>
<div class="c  pk" style="left:1880px;top:499px;width:9px;height:39px;background:#fcefea;border-right:none;"></div>
<div class="c  pk" style="left:1340px;top:538px;width:156px;height:38px;background:#fcefea;">Motor mechanical<br>failure</div>
<div class="c  pk" style="left:1496px;top:538px;width:111px;height:38px;background:#fcefea;"></div>
<div class="c ctr pk" style="left:1607px;top:538px;width:111px;height:38px;background:#fcefea;"></div>
<div class="c  pk" style="left:1718px;top:538px;width:162px;height:38px;background:#fcefea;"></div>
<div class="c  pk" style="left:1880px;top:538px;width:9px;height:38px;background:#fcefea;border-right:none;"></div>
<div class="c  pk" style="left:1340px;top:576px;width:156px;height:24px;background:#fcefea;">Wear</div>
<div class="c  pk" style="left:1496px;top:576px;width:111px;height:24px;background:#fcefea;"></div>
<div class="c ctr pk" style="left:1607px;top:576px;width:111px;height:24px;background:#fcefea;"></div>
<div class="c  pk" style="left:1718px;top:576px;width:162px;height:24px;background:#fcefea;"></div>
<div class="c  pk" style="left:1880px;top:576px;width:9px;height:24px;background:#fcefea;border-right:none;"></div>
<div class="c  pk" style="left:1340px;top:600px;width:156px;height:39px;background:#fcefea;">High voltage</div>
<div class="c  pk" style="left:1496px;top:600px;width:111px;height:39px;background:#fcefea;"></div>
<div class="c ctr pk" style="left:1607px;top:600px;width:111px;height:39px;background:#fcefea;"></div>
<div class="c  pk" style="left:1718px;top:600px;width:162px;height:39px;background:#fcefea;"></div>
<div class="c  pk" style="left:1880px;top:600px;width:9px;height:39px;background:#fcefea;border-right:none;"></div>
<div class="c  pk" style="left:1340px;top:639px;width:156px;height:39px;background:#fcefea;">Flight controller short</div>
<div class="c  pk" style="left:1496px;top:639px;width:111px;height:39px;background:#fcefea;"></div>
<div class="c ctr pk" style="left:1607px;top:639px;width:111px;height:39px;background:#fcefea;"></div>
<div class="c  pk" style="left:1718px;top:639px;width:162px;height:39px;background:#fcefea;"></div>
<div class="c  pk" style="left:1880px;top:639px;width:9px;height:39px;background:#fcefea;border-right:none;"></div>
<div class="c  pk" style="left:1340px;top:678px;width:156px;height:74px;background:#fcefea;">Hard landing</div>
<div class="c  pk" style="left:1496px;top:678px;width:111px;height:74px;background:#fcefea;">Material<br>hardness of<br>camera<br>mounting plate</div>
<div class="c ctr pk" style="left:1607px;top:678px;width:111px;height:74px;background:#fcefea;"><svg class="abs" style="left:43px;top:0" width="24" height="24" viewBox="0 0 24 24"><path fill="none" stroke="#1c1614" stroke-width="2.3" stroke-linejoin="round" d="M12 2.2L20.8 11L12 19.8L3.2 11Z"/></svg></div>
<div class="c  pk" style="left:1718px;top:678px;width:162px;height:74px;background:#fcefea;"></div>
<div class="c  pk" style="left:1880px;top:678px;width:9px;height:74px;background:#fcefea;border-right:none;"></div>
<div class="c  pk" style="left:1340px;top:752px;width:156px;height:74px;background:#fcefea;">Improperly designed<br>camera mounting plate</div>
<div class="c  pk" style="left:1496px;top:752px;width:111px;height:74px;background:#fcefea;"></div>
<div class="c ctr pk" style="left:1607px;top:752px;width:111px;height:74px;background:#fcefea;"></div>
<div class="c  pk" style="left:1718px;top:752px;width:162px;height:74px;background:#fcefea;"></div>
<div class="c  pk" style="left:1880px;top:752px;width:9px;height:74px;background:#fcefea;border-right:none;"></div>
<div class="abs" style="left:1888px;top:166px;width:20px;height:865px;background:#e7eff7;border-left:1px solid #b9cbdc;border-right:1px solid #d5e0eb"></div>
<div class="sbb" style="left:1889px;top:167px;width:19px;height:19px"><i style="left:5px;top:6px;border-left:3.5px solid transparent;border-right:3.5px solid transparent;border-bottom:4px solid #667"></i></div>
<div class="sbb" style="left:1889px;top:1011px;width:19px;height:19px"><i style="left:5px;top:7px;border-left:3.5px solid transparent;border-right:3.5px solid transparent;border-top:4px solid #667"></i></div>
<div class="abs" style="left:1894px;top:597px;width:9px;height:1px;background:#778;box-shadow:0 3px 0 #778"></div>
<div class="abs" style="left:466px;top:1031px;width:1422px;height:19px;background:linear-gradient(#eef0f2,#fff 40%,#fff 60%,#eef3fa)"></div>
<div class="abs" style="left:487px;top:1031px;width:1012px;height:19px;background:linear-gradient(#eef3f9,#dfe9f3);border:1px solid #b4c6d8"></div>
<div class="abs" style="left:990px;top:1037px;width:1px;height:8px;background:#778;box-shadow:3px 0 0 #778"></div>
<div class="sbb" style="left:466px;top:1031px;width:21px;height:19px"><i style="left:7px;top:5px;border-top:3.5px solid transparent;border-bottom:3.5px solid transparent;border-right:4px solid #667"></i></div>
<div class="sbb" style="left:1869px;top:1031px;width:19px;height:19px"><i style="left:8px;top:5px;border-top:3.5px solid transparent;border-bottom:3.5px solid transparent;border-left:4px solid #667"></i></div>
<div class="abs" style="left:458px;top:580px;width:3px;height:16px;background:#2a3038"></div>
<i class="abs" style="left:458px;top:571px;border-top:2.5px solid transparent;border-bottom:2.5px solid transparent;border-right:4px solid #3a4450"></i>
<i class="abs" style="left:458px;top:601px;border-top:2.5px solid transparent;border-bottom:2.5px solid transparent;border-left:4px solid #3a4450"></i>
<div class="abs" style="left:455px;top:110px;width:1px;height:940px;background:#a4b9cf"></div>
<div class="abs" style="left:465px;top:110px;width:1px;height:940px;background:#8ea9c5"></div>
<svg class="abs" style="left:264.0px;top:114.0px" width="22" height="28" viewBox="0 0 22 28"><g transform="rotate(33 11 14)"><rect x="8" y="3.4" width="6" height="17" fill="#f2b63c"/><rect x="8" y="3.4" width="2" height="17" fill="#f7cf6a"/><rect x="12.2" y="3.4" width="1.8" height="17" fill="#d99a22"/><path fill="#e8c9a0" d="M8 20.4H14L11 26Z"/><path fill="#444" d="M10 24.2H12L11 26Z"/><rect x="8" y="1" width="6" height="3" rx="1.2" fill="#e08c78"/><rect x="8" y="3.2" width="6" height="1.4" fill="#c8c8c8"/></g></svg>
<div class="tb" style="left:267.0px;top:110px"><span class="l">Edit</span></div><i class="tc" style="left:283.0px"></i>
<svg class="abs" style="left:306.5px;top:114.5px" width="28" height="28" viewBox="0 0 28 28"><circle cx="11" cy="11" r="7.6" fill="#d9ecf6" fill-opacity=".75" stroke="#3b6c80" stroke-width="2.2"/><path stroke="#111" stroke-width="4.2" stroke-linecap="round" d="M17.4 17.4L24 24"/><path stroke="#3b6c80" stroke-width="2" d="M16 16L18 18"/></svg>
<div class="tb" style="left:320.0px;top:110px"><span class="l">Find</span></div>
<svg class="abs" style="left:401.6px;top:116.6px" width="24" height="24" viewBox="0 0 24 24"><defs><radialGradient id="g1" cx=".45" cy=".35" r=".75"><stop offset="0" stop-color="#72ad3e"/><stop offset="1" stop-color="#3f7d1f"/></radialGradient></defs><circle cx="12" cy="12" r="11" fill="url(#g1)"/><path fill="#e4efd8" d="M6.6 6.2L19 12L6.6 17.8L10.2 12Z"/></svg>
<div class="tb" style="left:415.0px;top:110px"><span class="l">Properties</span></div>
<svg class="abs" style="left:483.6px;top:116.6px" width="24" height="24" viewBox="0 0 24 24"><defs><radialGradient id="g2" cx=".45" cy=".35" r=".75"><stop offset="0" stop-color="#98c27c"/><stop offset="1" stop-color="#82b265"/></radialGradient></defs><circle cx="12" cy="12" r="11" fill="url(#g2)"/><path fill="none" stroke="#f1f6ec" stroke-width="3" stroke-linecap="round" stroke-linejoin="round" d="M6.6 12.6L10.4 16.2L17.4 8.2"/></svg>
<div class="tb dis" style="left:495.2px;top:110px"><span class="l">Save</span></div>
<svg class="abs" style="left:534.2px;top:116.6px" width="24" height="24" viewBox="0 0 24 24"><defs><radialGradient id="g3" cx=".45" cy=".35" r=".75"><stop offset="0" stop-color="#e59a8c"/><stop offset="1" stop-color="#dc8272"/></radialGradient></defs><circle cx="12" cy="12" r="11" fill="url(#g3)"/><path stroke="#f8ecea" stroke-width="3.4" stroke-linecap="round" d="M8 8L16 16M16 8L8 16"/></svg>
<div class="tb dis" style="left:546.2px;top:110px"><span class="l">Cancel</span></div>
<svg class="abs" style="left:610.2px;top:116.6px" width="24" height="24" viewBox="0 0 24 24"><defs><radialGradient id="g4" cx=".45" cy=".35" r=".75"><stop offset="0" stop-color="#78b548"/><stop offset="1" stop-color="#569a2c"/></radialGradient></defs><circle cx="12" cy="12" r="11" fill="url(#g4)"/><path stroke="#eef6e6" stroke-width="4" d="M12 5.4V18.6M5.4 12H18.6"/></svg>
<div class="tb" style="left:615.7px;top:110px"><span class="l">Insert</span></div><i class="tc" style="left:636.0px"></i>
<svg class="abs" style="left:663.0px;top:116.6px" width="24" height="24" viewBox="0 0 24 24"><defs><radialGradient id="g5" cx=".45" cy=".35" r=".75"><stop offset="0" stop-color="#e87a4e"/><stop offset="1" stop-color="#d4532c"/></radialGradient></defs><circle cx="12" cy="12" r="11" fill="url(#g5)"/><path stroke="#f7e9e2" stroke-width="3.6" stroke-linecap="round" d="M6 14.4L18 9.6"/></svg>
<div class="tb" style="left:675.2px;top:110px"><span class="l">Delete</span></div>
<svg class="abs" style="left:739.0px;top:115.0px" width="26" height="29" viewBox="0 0 26 29"><defs><radialGradient id="b6" cx=".4" cy=".35" r=".7"><stop offset="0" stop-color="#fff27a"/><stop offset="1" stop-color="#f2d018"/></radialGradient></defs><path fill="url(#b6)" d="M13 1.6A8.6 8.6 0 0 1 18.6 16.8L17 21H9L7.4 16.8A8.6 8.6 0 0 1 13 1.6Z"/><rect x="9" y="20.4" width="8" height="5.6" rx="2.4" fill="#6f8ff0"/><rect x="10.6" y="25" width="4.8" height="2" rx="1" fill="#8aa4f4"/><circle cx="14.4" cy="12.6" r="3.8" fill="#e9f0c8" fill-opacity=".8" stroke="#8e96a0" stroke-width="1.5"/><path stroke="#4a5560" stroke-width="2.4" stroke-linecap="round" d="M17.6 16L22 20.6"/></svg>
<div class="tb" style="left:750.0px;top:110px"><span class="l">Search</span></div>
<svg class="abs" style="left:795.8px;top:115.0px" width="26" height="29" viewBox="0 0 26 29"><defs><radialGradient id="b7" cx=".4" cy=".35" r=".7"><stop offset="0" stop-color="#fff27a"/><stop offset="1" stop-color="#f2d018"/></radialGradient></defs><path fill="url(#b7)" d="M13 1.6A8.6 8.6 0 0 1 18.6 16.8L17 21H9L7.4 16.8A8.6 8.6 0 0 1 13 1.6Z"/><rect x="9" y="20.4" width="8" height="5.6" rx="2.4" fill="#6f8ff0"/><rect x="10.6" y="25" width="4.8" height="2" rx="1" fill="#8aa4f4"/></svg>
<div class="tb" style="left:800.8px;top:110px"><span class="l">Bank</span></div><i class="tc" style="left:820.0px"></i>
<svg class="abs" style="left:872.6px;top:115.8px" width="26" height="26" viewBox="0 0 26 26"><g fill="none" stroke="#4a4f58" stroke-width="2.6"><circle cx="5.6" cy="20" r="3.2"/><circle cx="20.4" cy="20" r="3.2"/></g><path fill="#4a4f58" d="M7.2 17.6L16.4 1.6Q18.4 3.6 17 7L9.6 19Z"/><path fill="#4a4f58" d="M18.8 17.6L9.6 1.6Q7.6 3.6 9 7L16.4 19Z"/></svg>
<div class="tb" style="left:885.5px;top:110px"><span class="l">Cut</span></div>
<svg class="abs" style="left:919.8px;top:118.8px" width="25" height="20" viewBox="0 0 25 20"><rect x="9" y="1.2" width="14" height="16" fill="#d8d4cc" fill-opacity=".7"/><rect x="1.6" y="2.4" width="15.4" height="16.6" fill="#f3efe6"/><rect x="3.4" y="5" width="11.6" height="1.3" fill="#d9cfc0"/><rect x="3.4" y="7.8" width="11.6" height="1.3" fill="#d9cfc0"/><rect x="3.4" y="10.6" width="11.6" height="1.3" fill="#d9cfc0"/><rect x="3.4" y="13.4" width="11.6" height="1.3" fill="#d9cfc0"/><rect x="3.4" y="16.2" width="11.6" height="1.3" fill="#d9cfc0"/><rect x="18.2" y="3.4" width="4" height="1.2" fill="#c4bfb6" fill-opacity=".7"/><rect x="18.2" y="6.2" width="4" height="1.2" fill="#c4bfb6" fill-opacity=".7"/><rect x="18.2" y="9" width="4" height="1.2" fill="#c4bfb6" fill-opacity=".7"/><rect x="18.2" y="11.8" width="4" height="1.2" fill="#c4bfb6" fill-opacity=".7"/><rect x="18.2" y="14.6" width="4" height="1.2" fill="#c4bfb6" fill-opacity=".7"/></svg>
<div class="tb" style="left:933.3px;top:110px"><span class="l">Copy</span></div>
<svg class="abs" style="left:972.7px;top:116.5px" width="22" height="23" viewBox="0 0 22 23"><g opacity=".72"><rect x="2.4" y="3.2" width="15.2" height="18.6" rx="1" fill="#d9d2c4" stroke="#b4aa98" stroke-width="1.2"/><rect x="6.6" y="1" width="6.8" height="4" rx="1" fill="#c3c8cc" stroke="#a3a8ac" stroke-width=".8"/><rect x="4.8" y="6.4" width="10.4" height="13.4" fill="#f1efe9"/><rect x="10" y="9.6" width="9.4" height="12.2" fill="#f6f5f1" stroke="#bdb9b0" stroke-width=".9"/><rect x="11.6" y="12" width="6" height="1" fill="#c9c5bc"/><rect x="11.6" y="14.8" width="6" height="1" fill="#c9c5bc"/><rect x="11.6" y="17.6" width="6" height="1" fill="#c9c5bc"/></g></svg>
<div class="tb dis" style="left:978.2px;top:110px"><span class="l">Paste</span></div><i class="tc dis" style="left:999.0px"></i>
<svg class="abs" style="left:1065.3px;top:115.8px" width="36" height="26" viewBox="0 0 36 26"><rect x="3" y="1" width="30" height="24.6" fill="#c9daec"/><rect x="3" y="1" width="30" height="3.3" fill="#a9c4e2"/><rect x="3" y="5.1" width="30" height="3.3" fill="#8fb2dc"/><rect x="3" y="9.2" width="30" height="3.3" fill="#7da4d4"/><rect x="3" y="13.3" width="30" height="3.3" fill="#6a94c8"/><rect x="3" y="17.4" width="30" height="3.3" fill="#5a84bc"/><rect x="3" y="21.2" width="30" height="4.4" fill="#46699e"/><path stroke="#7fc0ee" stroke-width="2.2" d="M1 8.8H35"/><path fill="#7fc0ee" d="M0 8.8L3.6 6V11.6ZM36 8.8L32.4 6V11.6Z"/><path fill="#f4d21c" stroke="#d0ae10" stroke-width=".6" d="M21 7.4L30.6 12.6L26.6 13.8L28.8 18L26.4 19.2L24.2 15L21.4 17.8Z"/></svg>
<div class="tb" style="left:1076.2px;top:110px"><span class="l">SmartSuggest</span></div><i class="tc" style="left:1120.0px"></i>
<svg class="abs" style="left:1196.0px;top:117.1px" width="22" height="23" viewBox="0 0 22 23"><rect x="1" y="1" width="20" height="21" fill="#f4f6c8" stroke="#a5cf90" stroke-width="1.3"/><rect x="8.2" y="2" width="5.6" height="19" fill="#b9dcea"/><rect x="2" y="5.2" width="18" height="1" fill="#fbfcf0"/><rect x="2" y="9.4" width="18" height="1" fill="#fbfcf0"/><rect x="2" y="13.6" width="18" height="1" fill="#fbfcf0"/><rect x="2" y="17.8" width="18" height="1" fill="#fbfcf0"/><rect x="7.4" y="2" width="1" height="19" fill="#9bcf8a"/><rect x="13.6" y="2" width="1" height="19" fill="#9bcf8a"/></svg>
<div class="tb" style="left:1207.3px;top:110px"><span class="l">Freeze Columns</span></div>
<svg class="abs" style="left:1289.6px;top:118.0px" width="24" height="22" viewBox="0 0 24 22"><path fill="none" stroke="#275a8c" stroke-width="2.3" stroke-linejoin="round" d="M1.8 1.8H22.2L12 12.6Z"/><path fill="#275a8c" d="M10.5 10H13.5V21L10.5 19Z"/></svg>
<div class="tb" style="left:1295.5px;top:110px"><span class="l">Filter</span></div><i class="tc" style="left:1314.0px"></i>
<svg class="abs" style="left:1368.7px;top:116.4px" width="24" height="24" viewBox="0 0 24 24"><defs><radialGradient id="g8" cx=".45" cy=".35" r=".75"><stop offset="0" stop-color="#7ca6dc"/><stop offset="1" stop-color="#4c7fc0"/></radialGradient></defs><circle cx="12" cy="12" r="11" fill="url(#g8)"/><path fill="none" stroke="#eef4fc" stroke-width="2.7" d="M17.9 10.6A6.1 6.1 0 1 1 12.6 5.9"/><path fill="#eef4fc" d="M12 2.4L17.2 6.2L12 9.6Z"/></svg>
<div class="tb" style="left:1380.3px;top:110px"><span class="l">Refresh</span></div>
<svg class="abs" style="left:1775.5px;top:116.9px" width="22" height="23" viewBox="0 0 22 23"><rect x="1" y="1" width="20" height="21" fill="#ecf4dc" stroke="#a9cf92" stroke-width="1.5"/><rect x="2" y="5.2" width="18" height="1" fill="#b4d49e"/><rect x="2" y="9.4" width="18" height="1" fill="#b4d49e"/><rect x="2" y="13.6" width="18" height="1" fill="#b4d49e"/><rect x="2" y="17.8" width="18" height="1" fill="#b4d49e"/><rect x="7.6" y="2" width="1" height="19" fill="#b4d49e"/><rect x="14" y="2" width="1" height="19" fill="#b4d49e"/><rect x="2" y="2" width="18" height="3.2" fill="#dcebc4"/><rect x="15" y="14.6" width="5" height="6.4" fill="#cfe2b4"/></svg>
<div class="tb" style="left:1779.5px;top:110px"><span class="l">Design FMEA</span></div><i class="tc" style="left:1821.0px"></i>
<svg class="abs" style="left:1859.5px;top:116.4px" width="24" height="24" viewBox="0 0 24 24"><defs><radialGradient id="g9" cx=".45" cy=".35" r=".75"><stop offset="0" stop-color="#72ad3e"/><stop offset="1" stop-color="#3f7d1f"/></radialGradient></defs><circle cx="12" cy="12" r="11" fill="url(#g9)"/><path fill="#e4efd8" d="M6.6 6.2L19 12L6.6 17.8L10.2 12Z"/></svg>
<div class="tb" style="left:1871.7px;top:110px"><span class="l">To Form</span></div>
<div class="corner l"></div><div class="corner r"></div>
</body>
</html>
